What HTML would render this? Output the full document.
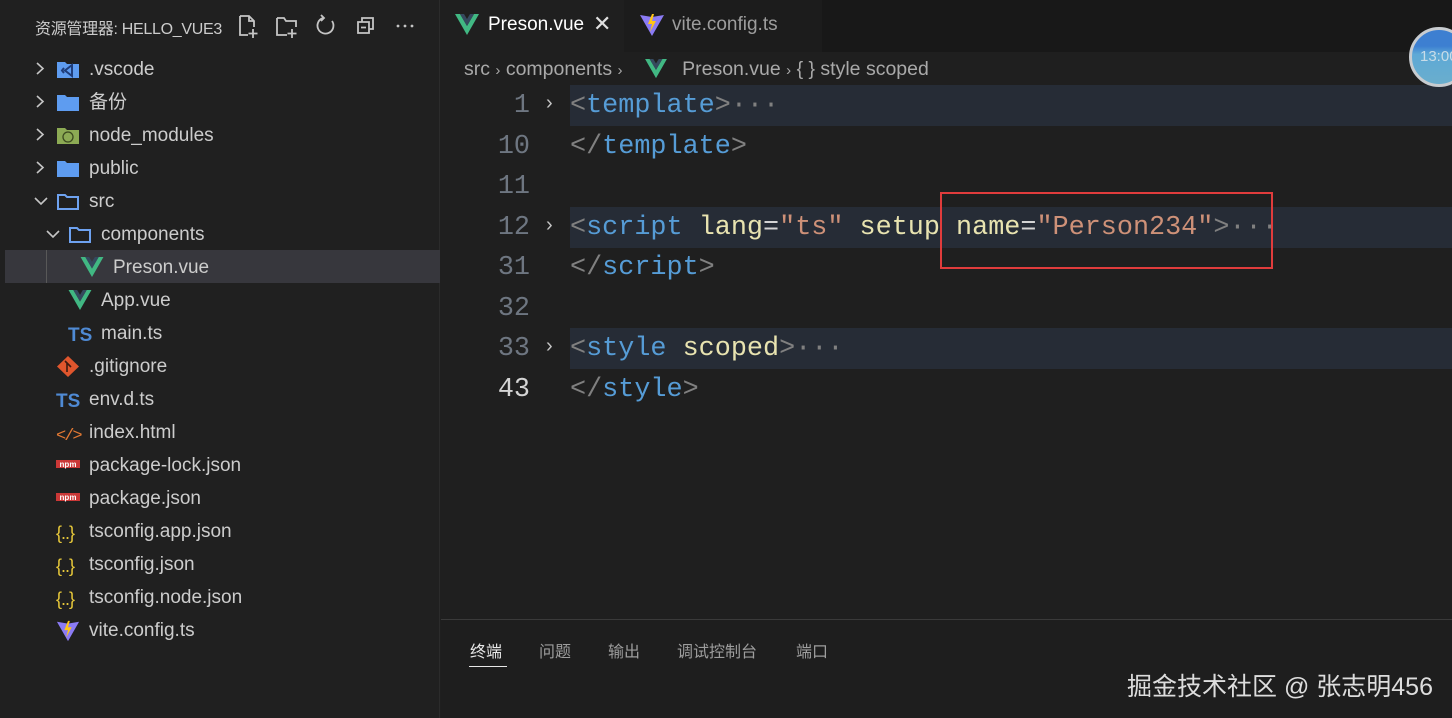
<!DOCTYPE html>
<html><head><meta charset="utf-8"><style>
*{margin:0;padding:0;box-sizing:border-box}
body{width:1452px;height:718px;background:#1f1f1f;overflow:hidden;position:relative;font-family:"Liberation Sans","Noto Sans CJK SC",sans-serif;color:#cccccc}
.abs{position:absolute}
#side{left:0;top:0;width:440px;height:718px;background:#202020;border-right:1px solid #2b2b2b}
.row{position:absolute;left:0;width:440px;height:33px;line-height:33px;font-size:19px;color:#cccccc;white-space:nowrap}
.row .t{position:absolute;top:1px}
.row .ic{position:absolute;top:6px;width:24px;height:21px}
.chev{position:absolute;top:0;font-size:16px;color:#c5c5c5}
.code{font-family:"Liberation Mono",monospace;font-size:26.8px;line-height:40.6px;white-space:pre;position:absolute;left:570px;top:0}
.ln{position:absolute;width:60px;text-align:right;left:470px;font-family:"Liberation Mono",monospace;font-size:26.8px;line-height:40.6px;color:#6e7681}
.hl{position:absolute;left:570px;right:0;height:40.6px;background:#262c36}
.p{color:#808080}.tg{color:#569cd6}.at{color:#e8e3b0}.s{color:#ce9178}.w{color:#d4d4d4}
</style></head><body>
<div id="side" class="abs">
 <div class="abs" style="left:35px;top:15px;font-size:16px;color:#cccccc;letter-spacing:-0.3px">资源管理器: HELLO_VUE3</div>
 <svg class="abs" style="left:236px;top:12px" width="190" height="28" viewBox="0 0 190 28" fill="none" stroke="#c5c5c5" stroke-width="1.8">
  <path d="M4 4h9l5 5v6M4 4v19h8M18 9h-5V4M17 17v9M12.5 21.5h9"/>
  <path d="M41 6h7l2 3h10v6M41 6v17h10M56 17v9M51.5 21.5h9"/>
  <path d="M96 9a8 8 0 1 1-9-3M85 3l3 3-3 3"/>
  <path d="M122 10h11v11h-11zM126 10V6h11v11h-4M125 15.5h5"/>
  <circle cx="162" cy="14" r="1.4" fill="#c5c5c5" stroke="none"/><circle cx="169" cy="14" r="1.4" fill="#c5c5c5" stroke="none"/><circle cx="176" cy="14" r="1.4" fill="#c5c5c5" stroke="none"/>
 </svg>
 <div class="abs" style="left:5px;top:250px;width:435px;height:33px;background:#37373d"></div>
 <div class="abs" style="left:46px;top:250px;width:1px;height:33px;background:#585858"></div>
</div>
<div id="rows"></div>
<div class="abs" style="left:441px;top:0;right:0;height:52px;background:#181818"></div>
<div class="abs" style="left:441px;top:0;width:183px;height:52px;background:#1f1f1f"></div>
<div class="abs" style="left:624px;top:0;width:198px;height:52px;background:#1c1c1c"></div>
<svg class="abs" style="left:455px;top:14px" width="24" height="22" viewBox="0 0 24 22"><path d="M0 0h5l7 12 7-12h5L12 21z" fill="#41b883"/><path d="M5 0h4l3 5 3-5h4l-7 12z" fill="#35495e"/></svg>
<div class="abs" style="left:488px;top:14px;font-size:19px;color:#ffffff">Preson.vue</div>
<div class="abs" style="left:593px;top:11px;font-size:22px;color:#e0e0e0">✕</div>
<svg class="abs" style="left:639px;top:12px" width="26" height="26" viewBox="0 0 26 26"><path d="M1 3l12 2 12-2-12 21z" fill="#8b7bf5"/><path d="M13 2l-4 10h4l-2 8 6-11h-4l2-7z" fill="#ffc517"/></svg>
<div class="abs" style="left:672px;top:14px;font-size:19px;color:#9d9d9d">vite.config.ts</div>
<div class="abs" style="left:464px;top:58px;font-size:19.5px;color:#a9a9a9;white-space:pre">src <span style="font-size:15px">›</span> components <span style="font-size:15px">›</span>           Preson.vue <span style="font-size:15px">›</span> { } style scoped</div>
<svg class="abs" style="left:645px;top:59px" width="22" height="20" viewBox="0 0 24 22"><path d="M0 0h5l7 12 7-12h5L12 21z" fill="#41b883"/><path d="M5 0h4l3 5 3-5h4l-7 12z" fill="#35495e"/></svg>
<div class="hl" style="top:85px"></div>
<div class="hl" style="top:207px"></div>
<div class="hl" style="top:328px"></div>
<div class="ln" style="top:86px">1</div>
<div class="ln" style="top:127px">10</div>
<div class="ln" style="top:167px">11</div>
<div class="ln" style="top:208px">12</div>
<div class="ln" style="top:248px">31</div>
<div class="ln" style="top:289px">32</div>
<div class="ln" style="top:329px">33</div>
<div class="ln" style="top:370px;color:#d4d4d4">43</div>
<div class="abs" style="left:546px;top:92px;font-size:20px;color:#c5c5c5">›</div>
<div class="abs" style="left:546px;top:214px;font-size:20px;color:#c5c5c5">›</div>
<div class="abs" style="left:546px;top:335px;font-size:20px;color:#c5c5c5">›</div>
<div class="code" style="top:86px"><span class="p">&lt;</span><span class="tg">template</span><span class="p">&gt;···</span></div>
<div class="code" style="top:127px"><span class="p">&lt;/</span><span class="tg">template</span><span class="p">&gt;</span></div>
<div class="code" style="top:208px"><span class="p">&lt;</span><span class="tg">script</span> <span class="at">lang</span><span class="w">=</span><span class="s">"ts"</span> <span class="at">setup</span> <span class="at">name</span><span class="w">=</span><span class="s">"Person234"</span><span class="p">&gt;···</span></div>
<div class="code" style="top:248px"><span class="p">&lt;/</span><span class="tg">script</span><span class="p">&gt;</span></div>
<div class="code" style="top:329px"><span class="p">&lt;</span><span class="tg">style</span> <span class="at">scoped</span><span class="p">&gt;···</span></div>
<div class="code" style="top:370px"><span class="p">&lt;/</span><span class="tg">style</span><span class="p">&gt;</span></div>
<div class="abs" style="left:940px;top:192px;width:333px;height:77px;border:2px solid #e03c3c"></div>
<div class="abs" style="left:1409px;top:27px;width:60px;height:60px;border-radius:50%;border:3px solid #c8ccd0;background:linear-gradient(180deg,#3d7fd1 0 30%,#5ea9d6 45%,#6aaecd);color:#c8dce8;font-size:15px;line-height:54px;padding-left:8px">13:00</div>
<div class="abs" style="left:441px;top:619px;right:0;height:1px;background:#3a3a3a"></div>
<div class="abs" style="left:441px;top:620px;right:0;bottom:0;background:#1e1e1e"></div>
<div class="abs" style="left:470px;top:638px;font-size:16px;color:#e7e7e7">终端</div>
<div class="abs" style="left:469px;top:666px;width:38px;height:1px;background:#e7e7e7"></div>
<div class="abs" style="left:539px;top:638px;font-size:16px;color:#9d9d9d">问题</div>
<div class="abs" style="left:608px;top:638px;font-size:16px;color:#9d9d9d">输出</div>
<div class="abs" style="left:677px;top:638px;font-size:16px;color:#9d9d9d">调试控制台</div>
<div class="abs" style="left:796px;top:638px;font-size:16px;color:#9d9d9d">端口</div>
<div class="abs" style="left:1127px;top:667px;font-size:25px;color:#dddddd">掘金技术社区 @ 张志明456</div>
<script>
const items=[
["c","vscode",".vscode",0],["c","folder","备份",0],["c","node","node_modules",0],["c","folder","public",0],["o","ofolder","src",0],["o","ofolder","components",1],
["","vue","Preson.vue",2],["","vue","App.vue",1],["","ts","main.ts",1],["","git",".gitignore",0],["","ts","env.d.ts",0],["","html","index.html",0],
["","npm","package-lock.json",0],["","npm","package.json",0],["","json","tsconfig.app.json",0],["","json","tsconfig.json",0],["","json","tsconfig.node.json",0],["","vite","vite.config.ts",0]];
const icons={
folder:'<svg width="24" height="21" viewBox="0 0 24 21"><path d="M1 3h8l2 2h12v14H1z" fill="#5e9cf0"/></svg>',
ofolder:'<svg width="24" height="21" viewBox="0 0 24 21"><path d="M2 4h7l2 2h11v12H2z" fill="none" stroke="#6ea2f0" stroke-width="2"/></svg>',
vscode:'<svg width="24" height="21" viewBox="0 0 24 21"><path d="M1 3h8l2 2h12v14H1z" fill="#5e9cf0"/><path d="M16 6v11l-7-5.5zM8 9l-2 2.5 2 2.5" fill="none" stroke="#1f3d7a" stroke-width="2"/></svg>',
node:'<svg width="24" height="21" viewBox="0 0 24 21"><path d="M1 3h8l2 2h12v14H1z" fill="#8caa54"/><circle cx="12" cy="12" r="5" fill="none" stroke="#3c4a20" stroke-width="1.3"/></svg>',
vue:'<svg width="24" height="21" viewBox="0 0 24 22"><path d="M0 0h5l7 12 7-12h5L12 21z" fill="#41b883"/><path d="M5 0h4l3 5 3-5h4l-7 12z" fill="#35495e"/></svg>',
ts:'<span style="position:relative;top:-3px;font:bold 19px Liberation Sans,sans-serif;color:#4f8ad4;line-height:21px">TS</span>',
git:'<svg width="24" height="21" viewBox="0 0 24 21"><path d="M12 0l11 10.5L12 21 1 10.5z" fill="#e0562d"/><path d="M9 5l6 6M11 7v9" stroke="#3a1a10" stroke-width="1.6"/></svg>',
html:'<span style="position:relative;top:-3px;font:17px Liberation Mono,monospace;color:#e37933;line-height:21px;letter-spacing:-2px">&lt;/&gt;</span>',
npm:'<svg width="24" height="21" viewBox="0 0 24 21"><rect x="0" y="5" width="24" height="8" fill="#cb3837"/><text x="12" y="12" font-size="8" font-family="Liberation Sans" font-weight="bold" fill="#fff" text-anchor="middle">npm</text></svg>',
json:'<span style="position:relative;top:-3px;font:18px Liberation Sans,sans-serif;color:#e8c93a;line-height:21px;letter-spacing:-1px">{..}</span>',
vite:'<svg width="24" height="24" viewBox="0 0 26 26"><path d="M1 3l12 2 12-2-12 21z" fill="#8b7bf5"/><path d="M13 2l-4 10h4l-2 8 6-11h-4l2-7z" fill="#ffc517"/></svg>'};
let h='';
items.forEach((it,i)=>{const top=52+i*33;const off=it[3]*12;
h+=`<div class="row" style="top:${top}px">`;
if(it[0]) h+=`<span class="chev" style="left:${34+off}px">${it[0]=='c'?'<svg width="12" height="33"><path d="M3 11l6 5.5-6 5.5" stroke="#c5c5c5" stroke-width="1.6" fill="none"/></svg>':'<svg width="14" height="33"><path d="M1 14l6 6 6-6" stroke="#c5c5c5" stroke-width="1.6" fill="none"/></svg>'}</span>`;
h+=`<span class="ic" style="left:${56+off}px">${icons[it[1]]}</span><span class="t" style="left:${89+off}px">${it[2]}</span></div>`;});
document.getElementById('rows').innerHTML=h;
</script>
</body></html>
